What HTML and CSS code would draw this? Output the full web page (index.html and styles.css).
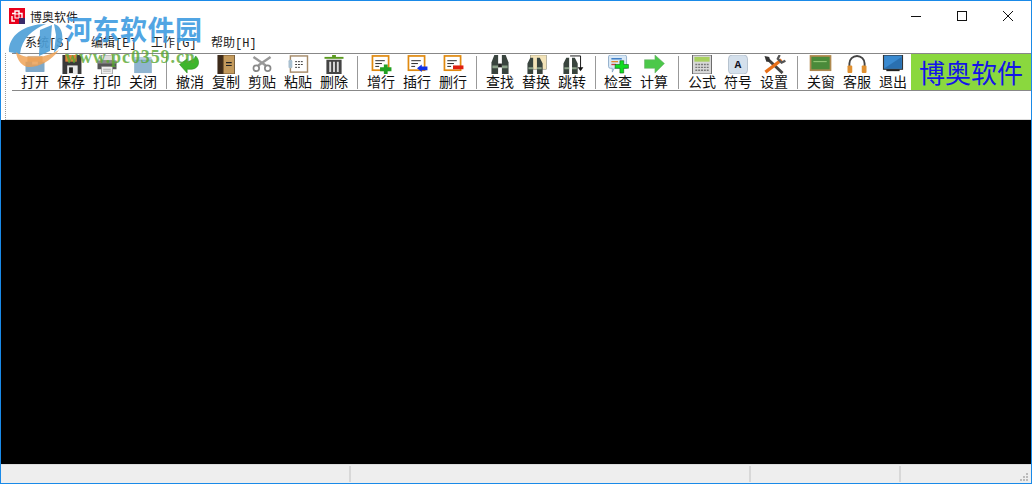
FILE: index.html
```html
<!DOCTYPE html>
<html lang="zh">
<head>
<meta charset="utf-8">
<title>博奥软件</title>
<link rel="stylesheet" href="styles.css">
</head>
<body>
<div class="window">
  <header class="titlebar">
    <svg class="appicon" viewBox="0 0 16 16"><rect width="16" height="16" fill="#e8001c"/><path d="M3 5.500h3v-2.500h4v2.500h3v5h-3M6 13H3V8" fill="none" stroke="#fff" stroke-width="1.400"/><rect x="6" y="6" width="4" height="4" fill="#e8001c" stroke="#fff"/><rect x="10" y="10" width="6" height="6" fill="#3a2a6a"/></svg>
    <span class="apptitle">博奥软件</span>
    <div class="wincontrols">
      <svg class="wc" viewBox="0 0 46 30"><path d="M18 15.500h10" stroke="#111" fill="none"/></svg>
      <svg class="wc" viewBox="0 0 46 30"><rect x="18.500" y="10.500" width="9" height="9" stroke="#111" fill="none"/></svg>
      <svg class="wc" viewBox="0 0 46 30"><path d="M18 10l10 10M28 10l-10 10" stroke="#111" fill="none"/></svg>
    </div>
  </header>
  <nav class="menubar">
    <span class="menu first">系统[S]</span><span class="menu">编辑[E]</span><span class="menu">工作[G]</span><span class="menu">帮助[H]</span>
  </nav>
  <div class="dock">
    <div class="toolbar">
      <div class="tool"><svg viewBox="0 0 24 20"><rect x="4" y="1" width="16" height="7" fill="#d9b38c"/><path d="M2 7h20v10a1 1 0 0 1-1 1H3a1 1 0 0 1-1-1z" fill="#7fa9c9"/><rect x="9" y="7" width="6" height="3" fill="#e9eef2"/></svg><span>打开</span></div>
      <div class="tool"><svg viewBox="0 0 24 20"><path d="M3 0h18l2 2v18H3z" fill="#3a3a3a"/><rect x="6" y="0" width="12" height="7" fill="#e0803a"/><rect x="8" y="11" width="11" height="9" fill="#e8e8e8"/><rect x="10" y="13" width="4" height="6" fill="#222"/></svg><span>保存</span></div>
      <div class="tool"><svg viewBox="0 0 24 20"><rect x="6" y="0" width="12" height="6" fill="#ddd" stroke="#777" stroke-width=".6"/><path d="M2 6h20v9H2z" fill="#555"/><rect x="2" y="6" width="20" height="3" fill="#888"/><rect x="6" y="12" width="12" height="8" fill="#eee" stroke="#777" stroke-width=".6"/><path d="M8 15h8M8 17h8" stroke="#aaa"/></svg><span>打印</span></div>
      <div class="tool"><svg viewBox="0 0 24 20"><path d="M3 2h7l2 2h9v15H3z" fill="#7da6c4"/><rect x="3" y="2" width="18" height="3" fill="#b9cfe0"/><rect x="3" y="6" width="18" height="13" fill="#8fb4d0"/></svg><span>关闭</span></div>
      <i class="sep"></i>
      <div class="tool"><svg viewBox="0 0 24 20"><path d="M1 10l8-6v3c5-1 8-3 9-6 5 5 4 13-4 14h-5v4z" fill="#3db52c" stroke="#2a8a1e" stroke-width=".6"/></svg><span>撤消</span></div>
      <div class="tool"><svg viewBox="0 0 24 20"><rect x="3" y="0" width="7" height="20" fill="#3c2a1a"/><rect x="9" y="0" width="12" height="20" fill="#c39a5c" stroke="#5a4020" stroke-width=".8"/><path d="M12 8h6M12 11h6" stroke="#222" stroke-width="1.200"/></svg><span>复制</span></div>
      <div class="tool"><svg viewBox="0 0 24 20"><path d="M21 2L8 11M3 2l13 9" stroke="#999" stroke-width="2.600" fill="none"/><circle cx="6" cy="14" r="3" fill="#fff" stroke="#888" stroke-width="1.800"/><circle cx="18" cy="14" r="3" fill="#fff" stroke="#888" stroke-width="1.800"/></svg><span>剪贴</span></div>
      <div class="tool"><svg viewBox="0 0 24 20"><rect x="4" y="1" width="18" height="17" fill="#fff" stroke="#a58a68" stroke-width="1.500"/><rect x="2" y="5" width="4" height="9" rx="1.500" fill="#a9c0d0"/><path d="M9 7h9M9 10h9M9 13h6" stroke="#333" stroke-dasharray="2 1"/></svg><span>粘贴</span></div>
      <div class="tool"><svg viewBox="0 0 24 20"><path d="M2 3h20" stroke="#5a9a20" stroke-width="2"/><rect x="10" y="0" width="4" height="3" fill="#5a9a20"/><rect x="4" y="5" width="16" height="15" fill="#444"/><path d="M8 7v11M12 7v11M16 7v11" stroke="#ddd" stroke-width="2"/></svg><span>删除</span></div>
      <i class="sep"></i>
      <div class="tool"><svg viewBox="0 0 24 20"><rect x="3" y="1" width="17" height="15" fill="#fff" stroke="#e08a10" stroke-width="1.800"/><path d="M6 6h10M6 9h7M6 12h4" stroke="#222"/><path d="M15 10h4v3h4v4h-4v3h-4v-3h-4v-4h4z" fill="#22a022"/></svg><span>增行</span></div>
      <div class="tool"><svg viewBox="0 0 24 20"><rect x="3" y="1" width="17" height="15" fill="#fff" stroke="#e08a10" stroke-width="1.800"/><path d="M6 6h10M6 9h7M6 12h4" stroke="#222"/><path d="M12 14l5-4v2h6v4h-6v2z" fill="#1030e8"/></svg><span>插行</span></div>
      <div class="tool"><svg viewBox="0 0 24 20"><rect x="3" y="1" width="17" height="15" fill="#fff" stroke="#e08a10" stroke-width="1.800"/><path d="M6 6h10M6 9h7M6 12h4" stroke="#222"/><rect x="12" y="11" width="11" height="4" fill="#e02010"/></svg><span>删行</span></div>
      <i class="sep"></i>
      <div class="tool"><svg viewBox="0 0 24 20"><path d="M6 0h4v20H3V8z" fill="#39443e"/><path d="M18 0h-4v20h7V8z" fill="#39443e"/><path d="M4 11h6v3H4zM14 11h6v3h-6z" fill="#8aa088"/><rect x="10" y="9" width="4" height="4" fill="#222"/></svg><span>查找</span></div>
      <div class="tool"><svg viewBox="0 0 24 20"><rect x="6" y="0" width="17" height="15" fill="#f3e3b8" stroke="#887" stroke-width=".6"/><path d="M6 3h3v17H3V9zM16 3h-3v17h6V9z" fill="#39443e"/><path d="M4 13h5v2H4zM13 13h5v2h-5z" fill="#8aa088"/></svg><span>替换</span></div>
      <div class="tool"><svg viewBox="0 0 24 20"><path d="M10 1h11v13" stroke="#111" fill="none"/><path d="M18 13h6l-3 4z" fill="#111"/><path d="M6 3h3v17H3V9zM15 3h-3v17h6V9z" fill="#39443e"/><path d="M4 13h5v2H4zM12 13h5v2h-5z" fill="#8aa088"/></svg><span>跳转</span></div>
      <i class="sep tight-right"></i>
      <div class="tool"><svg viewBox="0 0 24 20"><path d="M4 0h15a2 2 0 0 1 2 2v12H8l-2 4v-4H4a2 2 0 0 1-2-2V2a2 2 0 0 1 2-2z" fill="#d8e8f6" stroke="#7d9fc0" stroke-width=".8"/><path d="M5 4h11" stroke="#2a70c0" stroke-width="1.400"/><path d="M5 7h7" stroke="#e08a30" stroke-width="1.400"/><path d="M5 10h5" stroke="#d04040" stroke-width="1.400"/><path d="M14 6h4v4h5v4h-5v5h-4v-5h-5v-4h5z" fill="#10dd20" stroke="#106010" stroke-width=".6"/></svg><span>检查</span></div>
      <div class="tool"><svg viewBox="0 0 24 20"><path d="M2 5h11V0l10 9-10 10v-5H2z" fill="#4cc84a" stroke="#70b070" stroke-width=".6"/></svg><span>计算</span></div>
      <i class="sep wide-left"></i>
      <div class="tool"><svg viewBox="0 0 24 20"><rect x="2" y="0" width="20" height="20" fill="#d8d8d8" stroke="#666"/><rect x="4" y="2" width="16" height="5" fill="#a8d060"/><path d="M5 10h14M5 13h14M5 16h14" stroke="#777" stroke-width="1.500" stroke-dasharray="2 1"/></svg><span>公式</span></div>
      <div class="tool"><svg viewBox="0 0 24 20"><rect x="2" y="0" width="20" height="20" rx="4" fill="#d4e0ec" stroke="#b4c0cc"/><text class="keycap" x="12" y="14">A</text></svg><span>符号</span></div>
      <div class="tool"><svg viewBox="0 0 24 20"><path d="M4 3l17 16" stroke="#444" stroke-width="3"/><path d="M20 5L3 18" stroke="#e8701a" stroke-width="3.400"/><path d="M18 0l-2 4 4 4 4-2" fill="none" stroke="#555" stroke-width="2.400"/><path d="M2 1l5 1 1 5-4 0z" fill="#333"/></svg><span>设置</span></div>
      <i class="sep"></i>
      <div class="tool"><svg viewBox="0 0 24 20"><rect x="1" y="1" width="21" height="15" fill="#4a8a3a" stroke="#b08a50" stroke-width="1.800"/><path d="M4 7h14" stroke="#9fd080"/></svg><span>关窗</span></div>
      <div class="tool"><svg viewBox="0 0 24 20"><path d="M4 13V9a8 8 0 0 1 16 0v4" fill="none" stroke="#444" stroke-width="2"/><rect x="2" y="11" width="5" height="8" rx="1" fill="#e09030"/><rect x="17" y="11" width="5" height="8" rx="1" fill="#e09030"/></svg><span>客服</span></div>
      <div class="tool"><svg viewBox="0 0 24 20"><rect x="2" y="0" width="20" height="15" fill="#3a8ad0" stroke="#333" stroke-width="1.200"/><path d="M3 14L21 2v12z" fill="#2a70b0"/><rect x="5" y="15" width="14" height="2" fill="#222"/></svg><span>退出</span></div>
      <div class="banner">博奥软件</div>
    </div>
    <div class="blank"></div>
  </div>
  <main class="canvas"></main>
  <footer class="statusbar">
    <div class="pane p1"></div><div class="pane p2"></div><div class="pane p3"></div>
    <div class="pane p4"><svg class="grip" viewBox="0 0 9 9"><path d="M6 0h2v2H6zM3 3h2v2H3zM6 3h2v2H6zM0 6h2v2H0zM3 6h2v2H3zM6 6h2v2H6z" fill="#bbb"/></svg></div>
  </footer>
  <div class="watermark">
    <svg class="wm-logo" viewBox="0 0 70 70"><path d="M9 52C8 36 24 24 46 24 32 30 22 38 20 54z" fill="#4d9fd8"/><path d="M40 30l12-5-2 26-11 5z" fill="#4d9fd8"/><path d="M54 24c8 2 10 12 7 21l-7 8 2-18z" fill="#4d9fd8"/><path d="M16 52c8 7 26 8 43-2-8 11-20 17-30 17-7 0-12-7-13-15z" fill="#f0a050" opacity=".9"/></svg>
    <div class="wm-name">河东软件园</div>
    <div class="wm-url">www.pc0359.cn</div>
  </div>
</div>
</body>
</html>
```
FILE: styles.css
```css
* { box-sizing: border-box; }
html, body { margin: 0; padding: 0; }
body { width: 1032px; height: 484px; overflow: hidden; background: #fff; font-family: "Noto Sans CJK SC", "Liberation Sans", sans-serif; color: #111; }
.window { position: relative; width: 1032px; height: 484px; border: 1px solid #1a8ae8; display: flex; flex-direction: column; background: #fff; }
.titlebar { height: 30px; flex: none; display: flex; align-items: center; padding-left: 8px; }
.appicon { width: 16px; height: 16px; }
.apptitle { font-size: 12px; line-height: 16px; margin-left: 5px; color: #222; margin-top: 1px; }
.wincontrols { margin-left: auto; display: flex; margin-top: -1px; }
.wc { width: 46px; height: 30px; display: block; }
.menubar { height: 22px; flex: none; display: flex; align-items: center; padding-left: 24px; padding-top: 4px; font-size: 12px; line-height: 16px; color: #222; font-family: "Liberation Mono", "Noto Sans CJK SC", monospace; }
.menu { width: 60px; white-space: nowrap; }
.menu.first { width: 66px; }
.dock { height: 67px; flex: none; margin-left: 4px; border-left: 1px dotted #999; display: flex; flex-direction: column; }
.toolbar { height: 38px; flex: none; margin-left: 6px; padding-left: 5px; border-top: 1px solid #888; border-bottom: 1px solid #888; display: flex; align-items: stretch; }
.tool { width: 36px; flex: none; display: flex; flex-direction: column; align-items: center; }
.tool svg { width: 24px; height: 19px; margin-top: 1px; flex: none; display: block; }
.tool span { font-size: 14px; line-height: 16px; margin-top: -1px; white-space: nowrap; color: #111; }
.keycap { font-family: "Liberation Mono", monospace; font-size: 12px; font-weight: 700; fill: #112; text-anchor: middle; }
.sep { width: 1px; margin: 2px 5px 1px; background: #999; flex: none; }
.sep.tight-right { margin-right: 4px; }
.sep.wide-left { margin-left: 6px; }
.banner { flex: 1; background: #8ad83e; color: #1414e8; font-size: 26px; line-height: 36px; text-align: center; white-space: nowrap; }
.blank { flex: 1; border-bottom: 1px solid #ddd; }
.canvas { height: 344px; flex: none; background: #000; }
.statusbar { flex: 1; display: flex; background: #eee; border-top: 1px solid #ddd; }
.pane { border-right: 2px solid #d8d8d8; margin: 1px 0; }
.p1 { width: 350px; }
.p2 { width: 400px; }
.p3 { width: 150px; }
.p4 { flex: 1; border-right: 0; position: relative; }
.grip { position: absolute; right: 2px; bottom: 0; width: 9px; height: 9px; }
.watermark { position: absolute; left: 0; top: 0; width: 220px; height: 70px; pointer-events: none; }
.wm-logo { position: absolute; left: -1px; top: -1px; width: 70px; height: 70px; opacity: .9; }
.wm-name { position: absolute; left: 64px; top: 8px; font-size: 27px; line-height: 40px; font-weight: 700; letter-spacing: .5px; color: #3f9ce0; opacity: .9; white-space: nowrap; }
.wm-url { position: absolute; left: 64px; top: 46px; font-family: "Liberation Serif", serif; font-size: 18px; line-height: 20px; font-weight: 700; letter-spacing: .9px; color: #58a832; opacity: .8; white-space: nowrap; }
```
